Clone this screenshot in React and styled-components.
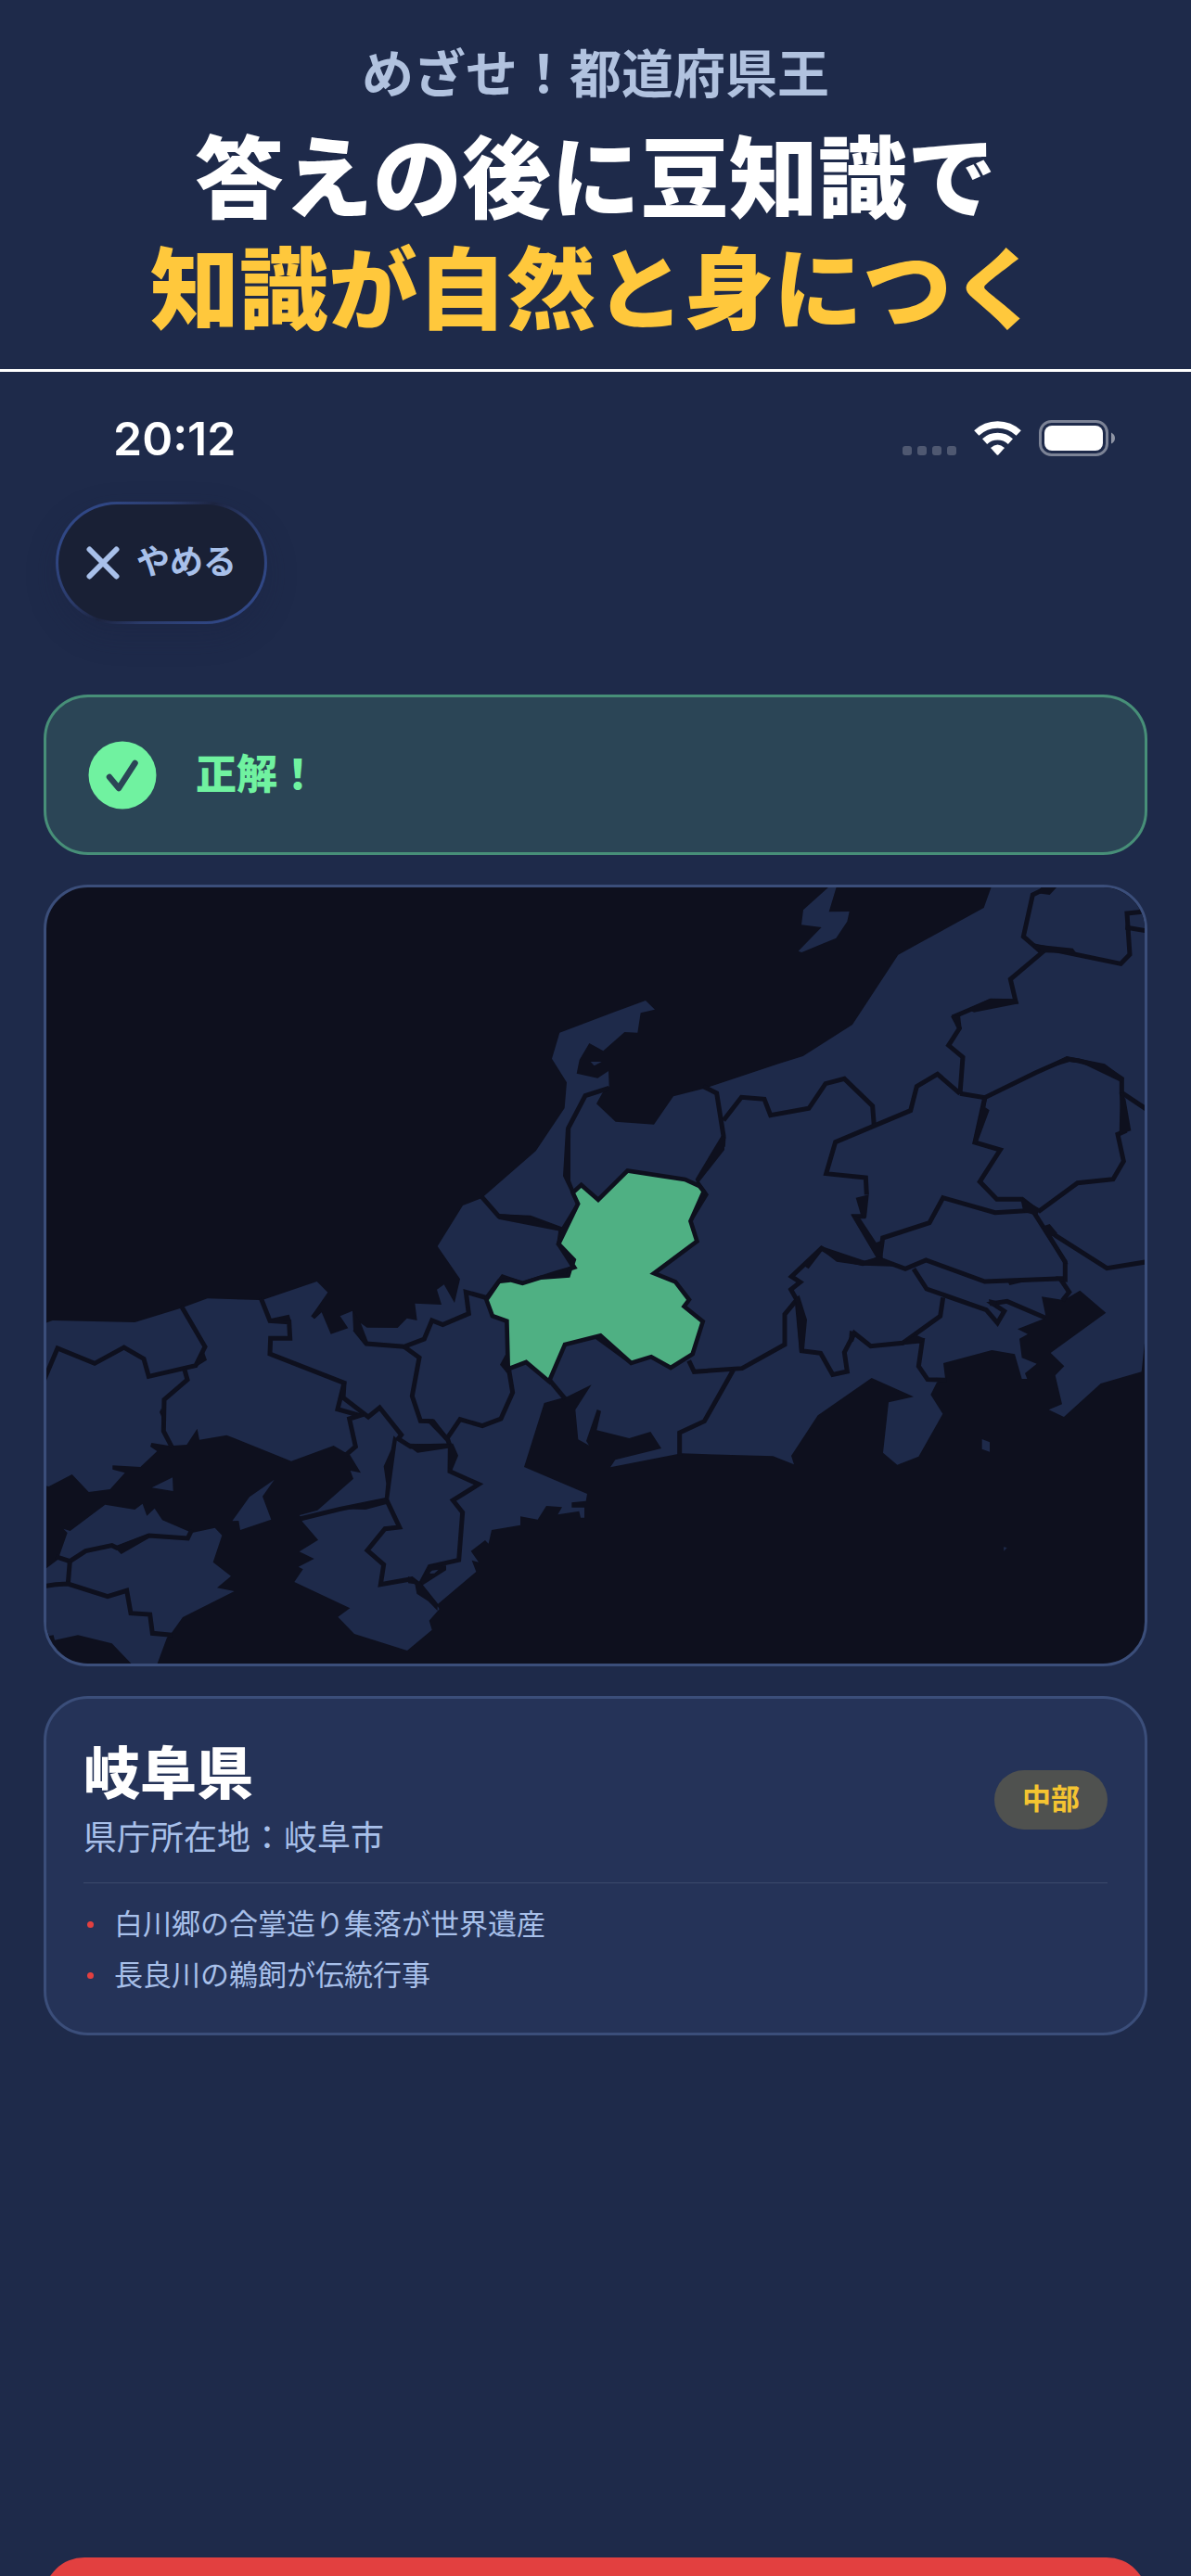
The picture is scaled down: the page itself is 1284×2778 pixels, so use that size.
import React from "react";
import styled, { createGlobalStyle } from "styled-components";

const color = {
  page: "#1e2a4a",
  sea: "#0e101e",
  card: "#253358",
  line: "#3b4e7a",
  rule: "#3c4a6c",
  sky: "#a8c0ea",
  tagline: "#b1c2df",
  gold: "#ffc83c",
  red: "#e24040",
  mint: "#70f2a0",
  found: "#4fb083",
};

const textFont = `"Liberation Sans", "Noto Sans CJK JP", sans-serif`;

const GlobalStyle = createGlobalStyle`
  *, *::before, *::after { box-sizing: border-box; }
  body {
    margin: 0;
    background: ${color.page};
    color: #fff;
    font-family: ${textFont};
  }
  h1, h2, p, ul { margin: 0; padding: 0; font-weight: inherit; }
`;

const Screen = styled.div`
  height: 100vh;
  min-height: 600px;
  overflow: hidden;
  display: flex;
  flex-direction: column;
  & > * { flex: none; }
`;

const Hero = styled.header`
  padding: 42px 24px 24px;
  border-bottom: 3px solid #fff;
  text-align: center;
  font-weight: 700;
`;

const Tagline = styled.p`
  margin-bottom: 14px;
  font-size: 56px;
  line-height: 78px;
  color: ${color.tagline};
`;

const Headline = styled.h1`
  font-size: 96px;
  font-weight: 900;
  line-height: 120px;
`;

const HeadlineRow = styled.span`
  display: block;
  color: ${(p) => (p.$accent ? color.gold : "#fff")};
`;

const StatusBar = styled.div`
  display: flex;
  align-items: center;
  justify-content: space-between;
  height: 140px;
  padding: 4px 82px 0 122px;
`;

const Clock = styled.time`
  font-family: Inter, sans-serif;
  font-size: 50px;
  font-weight: 600;
  line-height: 60px;
`;

const StatusIcons = styled.svg`
  display: block;
  width: 230px;
  height: 40px;
`;

const Toolbar = styled.nav`
  display: flex;
  padding: 0 60px;
  margin-bottom: 76px;
`;

const QuitButton = styled.button`
  display: flex;
  align-items: center;
  gap: 18px;
  height: 132px;
  padding: 0 30px;
  border: 3px solid transparent;
  border-radius: 66px;
  background:
    linear-gradient(#192035, #192035) padding-box,
    linear-gradient(135deg, #304785 15%, #2b3b6a 35%, #1c2440 48%, #2b3b6a 62%, #304785 85%) border-box;
  box-shadow: 0 12px 32px rgba(28, 34, 64, 0.3);
  color: ${color.sky};
  font: 700 36px/52px ${textFont};
`;

const CloseIcon = styled.svg`
  width: 36px;
  height: 36px;
`;

const Content = styled.main`
  display: flex;
  flex-direction: column;
  gap: 32px;
  padding: 0 47px;
`;

const Panel = styled.section`
  border: 3px solid ${color.line};
  border-radius: 48px;
  background: ${color.card};
  overflow: hidden;
`;

const ResultBanner = styled(Panel)`
  display: flex;
  align-items: center;
  gap: 42px;
  height: 173px;
  padding: 0 45px;
  border-color: #478f78;
  background: #2b4556;
`;

const CheckBadge = styled.svg`
  width: 74px;
  height: 74px;
`;

const ResultText = styled.p`
  font-size: 44px;
  font-weight: 900;
  line-height: 64px;
  color: ${color.mint};
`;

const MapPanel = styled(Panel)`
  background: ${color.sea};
`;

const MapDrawing = styled.svg`
  display: block;
  width: 100%;
  height: auto;
`;

const InfoCard = styled(Panel)`
  padding: 40px 40px 34px;
`;

const InfoHead = styled.div`
  display: flex;
  align-items: center;
  justify-content: space-between;
  padding-bottom: 20px;
  border-bottom: 1px solid ${color.rule};
`;

const Prefecture = styled.h2`
  font-size: 61px;
  font-weight: 900;
  line-height: 84px;
`;

const Capital = styled.p`
  font-size: 36px;
  line-height: 54px;
  color: ${color.sky};
`;

const RegionTag = styled.span`
  padding: 0 30px;
  border-radius: 32px;
  background: #4f514f;
  color: #f5c431;
  font-size: 31px;
  font-weight: 700;
  line-height: 64px;
`;

const Facts = styled.ul`
  padding-top: 17px;
  list-style: none;
`;

const Fact = styled.li`
  display: flex;
  align-items: center;
  gap: 22px;
  padding-left: 4px;
  font-size: 31px;
  line-height: 55px;
  color: ${color.sky};

  &::before {
    content: "";
    width: 7px;
    height: 7px;
    border-radius: 50%;
    background: ${color.red};
  }
`;

const NextButton = styled.button`
  height: 168px;
  margin: 563px 47px 0;
  border: 0;
  border-radius: 44px;
  background: ${color.red};
`;

/* Map geometry */

const HONSHU =
  "M3086 50 L3590 50 L3590 1440 L3582 1525 L3572 1618 L3440 1656 L3321 1764 L3272 1741 L3315 1723 L3293 1630 L3322 1600 L3278 1557 L3457 1427 L3373 1355 L3331 1380 L3315 1385 L3249 1375 L3262 1437 L3255 1447 L3171 1480 L3204 1496 L3177 1511 L3185 1573 L3233 1592 L3195 1623 L3202 1641 L3185 1641 L3162 1561 L3088 1548 L2931 1590 L2937 1640 L2910 1652 L2890 1692 L2929 1754 L2851 1892 L2782 1919 L2736 1880 L2754 1717 L2835 1699 L2699 1638 L2525 1759 L2439 1890 L2448 1918 L2380 1891 L2084 1882 L1854 1927 L1870 1903 L2019 1866 L1984 1812 L1915 1833 L1810 1807 L1824 1745 L1811 1740 L1776 1842 L1785 1856 L1750 1837 L1741 1741 L1793 1660 L1711 1700 L1696 1703 L1640 1719 L1575 1926 L1779 2013 L1775 2036 L1729 2041 L1729 2057 L1770 2057 L1770 2090 L1758 2090 L1753 2069 L1684 2080 L1698 2056 L1647 2052 L1619 2096 L1563 2086 L1563 2114 L1470 2130 L1460 2174 L1449 2163 L1403 2198 L1428 2234 L1406 2228 L1420 2265 L1293 2372 L1301 2386 L1268 2423 L1277 2453 L1197 2520 L1026 2466 L973 2411 L1012 2383 L832 2298 L860 2257 L845 2249 L896 2223 L848 2200 L909 2162 L858 2103 L849 2082 L907 2066 L1023 1964 L1013 1938 L1047 1945 L1010 1884 L995 1878 L959 1857 L822 1907 L613 1823 L525 1838 L518 1802 L484 1854 L430 1858 L370 1848 L366 1860 L388 1875 L334 1926 L244 1921 L244 1934 L284 1945 L236 1998 L167 2007 L113 1950 L38 1989 L20 1985 L20 1463 L50 1452 L316 1458 L465 1412 L551 1381 L718 1386 L735 1384 L905 1326 L940 1361 L887 1438 L897 1447 L920 1425 L950 1496 L1006 1477 L980 1438 L1020 1421 L1023 1482 L1047 1461 L1067 1475 L1166 1476 L1196 1445 L1229 1452 L1222 1397 L1308 1401 L1293 1352 L1316 1336 L1350 1395 L1368 1318 L1295 1212 L1377 1080 L1433 1058 L1446 1049 L1613 904 L1706 765 L1713 682 L1665 605 L1690 521 L1864 455 L1968 417 L1998 446 L1952 457 L1942 521 L1900 519 L1831 580 L1786 555 L1754 609 L1745 653 L1813 668 L1848 645 L1850 695 L1828 716 L1809 751 L1871 809 L1995 818 L2058 727 L2153 703 L2175 696 L2400 621 L2477 597 L2637 495 L2785 269 L3062 117 Z";

const SHIKOKU =
  "M20 2261 L68 2225 L73 2210 L98 2139 L85 2126 L107 2133 L220 2048 L316 2064 L341 2045 L355 2084 L380 2060 L405 2098 L492 2135 L505 2138 L575 2123 L598 2147 L569 2234 L627 2279 L582 2317 L638 2328 L471 2412 L433 2465 L420 2478 L386 2570 L312 2570 L242 2497 L132 2470 L57 2486 L53 2470 L40 2472 L20 2440 Z";

const ISLANDS = [
  "M767 1967 L729 2021 L757 2096 L657 2130 L652 2100 L631 2101 L687 2023 Z",
  "M371 1993 L438 1960 L440 2004 Z",
  "M2560 50 L2478 124 L2472 172 L2537 180 L2462 257 L2473 261 L2584 215 L2620 161 L2627 129 L2561 130 L2585 50 Z",
  "M1790 615 L1826 615 L1802 628 Z",
  "M3056 1836 L3081 1846 L3081 1877 L3056 1868 Z",
  "M3126 2185 L3137 2187 L3127 2198 Z",
];

const GIFU =
  "M1741 1040 L1760 1023 L1815 1071 L1912 975 L2094 1003 L2138 1023 L2148 1036 L2106 1130 L2126 1193 L1981 1301 L2060 1333 L2100 1385 L2083 1408 L2145 1458 L2114 1556 L2049 1597 L1987 1562 L1923 1582 L1824 1493 L1702 1524 L1653 1638 L1583 1579 L1530 1599 L1526 1449 L1478 1432 L1461 1386 L1498 1332 L1532 1328 L1570 1339 L1630 1320 L1723 1313 L1730 1290 L1748 1284 L1739 1270 L1744 1254 L1695 1203 L1757 1075 Z";

const BORDERS = [
  "M22 1646 L66 1542 L186 1591 L281 1539 L345 1576 L361 1633 L513 1598 L543 1537 L466 1405",
  "M476 1608 L486 1644 L411 1708 L409 1810 L436 1862",
  "M724 1380 L753 1453 L815 1457 L818 1510 L755 1510 L753 1560 L993 1654 L972 1739 L1045 1760",
  "M993 1654 L990 1702 L1071 1764 L1108 1734 L1178 1822 L1168 1835 L1208 1860 L1335 1857",
  "M1055 1756 L1010 1770 L1030 1860 L1000 1886",
  "M850 2094 L980 2062 L1130 2032 L1172 2121 L1125 2126 L1068 2196 L1121 2242 L1111 2306 L1212 2288 L1240 2310 L1294 2378",
  "M1027 1480 L1065 1527 L1187 1537 L1252 1512 L1277 1452 L1312 1466 L1396 1430 L1387 1360 L1458 1380",
  "M1187 1537 L1236 1572 L1213 1697 L1240 1777 L1278 1778 L1325 1835",
  "M1325 1835 L1368 1772 L1440 1793 L1500 1770 L1538 1685 L1524 1600",
  "M1325 1828 L1336 1860 L1335 1940 L1428 1982 L1345 2034 L1376 2073 L1364 2227 L1270 2248 L1240 2305",
  "M1850 700 L1773 725 L1718 830 L1716 985",
  "M1438 1052 L1493 1115 L1595 1120 L1695 1157 L1688 1205",
  "M2155 695 L2198 717 L2220 855 L2218 890",
  "M2220 805 L2278 730 L2352 736 L2372 788 L2496 766 L2550 686 L2611 670 L2702 758 L2707 822",
  "M2985 718 L2912 655 L2845 695 L2825 773 L2582 875 L2552 977 L2680 990 L2683 1045",
  "M2675 1060 L2673 1115 L2645 1115 L2722 1245",
  "M2985 718 L3065 731 L3230 650 L3330 606 L3370 612 L3455 635 L3508 670 L3508 715 L3590 770",
  "M2985 718 L2994 600 L2948 562 L2983 507 L2967 468 L3080 420 L3165 420 L3148 348 L3250 262 L3190 210 L3220 75 L3250 60 L3290 50",
  "M3225 240 L3505 298 L3534 268 L3525 135 L3590 128",
  "M3520 180 L3590 192",
  "M3508 715 L3518 840 L3495 850 L3514 937 L3480 995 L3365 1007 L3238 1100",
  "M3065 731 L3033 876 L3115 900 L3049 1003 L3104 1060 L3186 1060 L3238 1100",
  "M2726 1250 L2735 1185 L2886 1136 L2930 1055 L3098 1103 L3220 1096 L3325 1262 L3325 1320 L3310 1318 L3338 1360 L3316 1388",
  "M3260 1150 L3295 1178 L3460 1283 L3590 1262",
  "M2728 1255 L2808 1285 L2875 1257 L3065 1326 L3320 1316",
  "M2728 1252 L2670 1268 L2590 1250 L2537 1218 L2440 1310 L2468 1328 L2438 1352 L2457 1385 L2418 1432 L2418 1530 L2280 1607 L2125 1618 L2108 1582",
  "M2457 1380 L2473 1550 L2534 1558 L2573 1627 L2620 1617 L2611 1555 L2643 1493 L2696 1535 L2800 1525 L2921 1438 L2930 1378",
  "M2835 1285 L2877 1350 L3070 1418 L3106 1460 L3128 1422 L3090 1397 L3137 1390 L3260 1443",
  "M2800 1523 L2863 1517 L2851 1600 L2880 1643 L2942 1645",
  "M2252 1612 L2158 1778 L2078 1815 L2078 1888",
  "M1653 1640 L1708 1706",
  "M60 2216 L106 2231 L157 2198 L242 2180 L258 2188 L362 2148 L487 2157 L500 2130",
  "M106 2231 L100 2304",
  "M20 2312 L60 2306 L100 2304 L228 2345 L290 2326 L303 2399 L365 2403 L373 2464 L436 2470",
];

/* Places where neighbouring outlines drift apart and leave a wedge of sea colour. */
const WEDGES = [
  "M540 1555 L549 1580 L510 1604 L525 1565 Z",
  "M403 1735 L396 1748 L403 1765 L410 1800 Z",
  "M753 1447 L815 1433 L822 1455 Z",
  "M886 1438 L897 1447 L920 1425 L915 1405 Z",
  "M1153 1825 L1145 1870 L1121 1924 L1129 1980 L1124 2032 L1137 2035 L1164 1835 Z",
  "M980 2062 L1062 2064 L1130 2046 L1130 2028 Z",
  "M1023 1421 L1023 1482 L1060 1530 L1070 1520 L1047 1461 Z",
  "M1519 1555 L1497 1595 L1525 1628 L1530 1580 Z",
  "M1278 1772 L1285 1772 L1335 1840 L1335 1855 L1325 1845 L1262 1780 Z",
  "M1190 1850 L1335 1853 L1330 1865 L1230 1880 Z",
  "M1336 1850 L1345 1850 L1362 1889 L1343 1935 L1330 1930 Z",
  "M1270 2243 L1323 2245 L1323 2260 L1248 2308 L1240 2298 Z",
  "M1200 2280 L1240 2300 L1295 2372 L1295 2391 L1265 2360 L1228 2336 L1222 2305 L1200 2302 Z",
  "M1710 830 L1725 830 L1725 1000 L1735 1025 L1760 1075 L1745 1077 L1701 985 Z",
  "M1493 1107 L1595 1115 L1628 1135 L1695 1150 L1692 1163 L1492 1124 Z",
  "M1743 1075 L1757 1075 L1697 1200 L1750 1284 L1723 1320 L1498 1332 L1462 1390 L1448 1375 L1503 1302 L1570 1325 L1680 1290 L1725 1277 L1679 1206 L1697 1150 Z",
  "M2213 855 L2228 860 L2223 870 L2223 900 L2142 1003 L2172 1045 L2120 1130 L2110 1115 L2145 1036 L2129 995 Z",
  "M1805 1511 L1922 1597 L1935 1580 L1824 1493 Z",
  "M2648 1055 L2690 1045 L2682 1120 L2664 1110 Z",
  "M2632 1110 L2660 1118 L2714 1200 L2728 1195 L2735 1250 L2715 1250 Z",
  "M2537 1212 L2680 1260 L2722 1244 L2790 1278 L2670 1274 L2586 1262 L2540 1226 L2495 1285 L2480 1275 Z",
  "M3230 648 L3330 597 L3453 622 L3515 668 L3508 682 L3380 620 L3340 615 Z",
  "M2955 468 L2985 465 L2990 507 L2975 505 Z",
  "M3010 445 L3083 410 L3168 412 L3175 427 L3030 455 Z",
  "M3248 50 L3298 50 L3275 75 L3235 70 Z",
  "M3220 235 L3350 248 L3362 265 L3260 262 Z",
  "M3503 720 L3520 735 L3538 838 L3500 850 Z",
  "M3060 735 L3072 735 L3067 763 L3080 772 L3040 880 L3026 878 Z",
  "M3180 1055 L3246 1092 L3232 1112 L3190 1100 Z",
  "M3250 1148 L3275 1140 L3300 1170 L3282 1180 L3335 1270 L3318 1265 Z",
  "M3140 1327 L3200 1325 L3145 1338 Z",
  "M2453 1380 L2465 1370 L2490 1450 L2480 1555 L2466 1555 Z",
  "M2628 1485 L2650 1490 L2640 1520 L2625 1525 Z",
  "M2795 1530 L2840 1498 L2868 1510 L2860 1522 Z",
  "M3078 1383 L3105 1390 L3100 1405 L3082 1405 Z",
  "M240 2175 L272 2208 L362 2156 L360 2142 L258 2182 Z",
];

function PrefectureMap() {
  return (
    <MapDrawing viewBox="30 51 3552 2511" role="img" aria-label="岐阜県">
      <g fill={color.page}>
        <path d={HONSHU} />
        <path d={SHIKOKU} />
        {ISLANDS.map((d) => (
          <path key={d} d={d} />
        ))}
      </g>
      <g fill="none" stroke={color.sea} strokeWidth="15">
        {BORDERS.map((d) => (
          <path key={d} d={d} />
        ))}
      </g>
      <g fill={color.sea}>
        {WEDGES.map((d) => (
          <path key={d} d={d} />
        ))}
      </g>
      <path fill={color.page} d="M1270 2268 L1277 2261 L1298 2258 L1285 2270 L1272 2271 Z" />
      <path fill={color.sea} stroke={color.sea} strokeWidth="28" d={GIFU} />
      <path fill={color.found} d={GIFU} />
    </MapDrawing>
  );
}

function StatusGlyphs() {
  return (
    <StatusIcons viewBox="972 453 230 40" aria-hidden="true">
      <g fill="#fff" fillOpacity="0.22">
        <rect x="973" y="481" width="10" height="10" rx="3" />
        <rect x="989" y="481" width="10" height="10" rx="3" />
        <rect x="1005" y="481" width="10" height="10" rx="3" />
        <rect x="1021" y="481" width="10" height="10" rx="3" />
      </g>
      <g fill="none" stroke="#fff" strokeWidth="7.6">
        <path d="M1052.800 467.100 A33 33 0 0 1 1098.200 467.100" />
        <path d="M1061.600 476.100 A20.500 20.500 0 0 1 1089.400 476.100" />
      </g>
      <path fill="#fff" d="M1068 483 Q1075.500 476 1083 483 L1076.300 490.400 Q1075.500 491.200 1074.700 490.400 Z" />
      <rect x="1121.500" y="454.500" width="72" height="36" rx="12" fill="none" stroke="#fff" strokeOpacity="0.42" strokeWidth="3" />
      <rect x="1126" y="459" width="63" height="27" rx="8" fill="#fff" />
      <path fill="#fff" fillOpacity="0.5" d="M1198 466.500 Q1202 468.500 1202 472.500 Q1202 476.500 1198 478.500 Z" />
    </StatusIcons>
  );
}

export default function App() {
  return (
    <>
      <GlobalStyle />
      <Screen>
        <Hero>
          <Tagline>めざせ！都道府県王</Tagline>
          <Headline>
            <HeadlineRow>答えの後に豆知識で</HeadlineRow>
            <HeadlineRow $accent>知識が自然と身につく</HeadlineRow>
          </Headline>
        </Hero>

        <StatusBar>
          <Clock>20:12</Clock>
          <StatusGlyphs />
        </StatusBar>

        <Toolbar>
          <QuitButton type="button">
            <CloseIcon viewBox="0 0 36 36" fill="none" stroke="currentColor" strokeWidth="6" strokeLinecap="round" aria-hidden="true">
              <path d="M3.500 3.500 L32.500 32.500 M32.500 3.500 L3.500 32.500" />
            </CloseIcon>
            やめる
          </QuitButton>
        </Toolbar>

        <Content>
          <ResultBanner>
            <CheckBadge viewBox="0 0 74 74" aria-hidden="true">
              <circle cx="37" cy="37" r="36.500" fill={color.mint} />
              <path d="M23 39 L33 51 L50.500 24" fill="none" stroke="#2b4556" strokeWidth="6.500" strokeLinecap="round" strokeLinejoin="round" />
            </CheckBadge>
            <ResultText>正解！</ResultText>
          </ResultBanner>

          <MapPanel>
            <PrefectureMap />
          </MapPanel>

          <InfoCard>
            <InfoHead>
              <div>
                <Prefecture>岐阜県</Prefecture>
                <Capital>県庁所在地：岐阜市</Capital>
              </div>
              <RegionTag>中部</RegionTag>
            </InfoHead>
            <Facts>
              <Fact>白川郷の合掌造り集落が世界遺産</Fact>
              <Fact>長良川の鵜飼が伝統行事</Fact>
            </Facts>
          </InfoCard>
        </Content>

        <NextButton type="button" aria-label="次へ" />
      </Screen>
    </>
  );
}
